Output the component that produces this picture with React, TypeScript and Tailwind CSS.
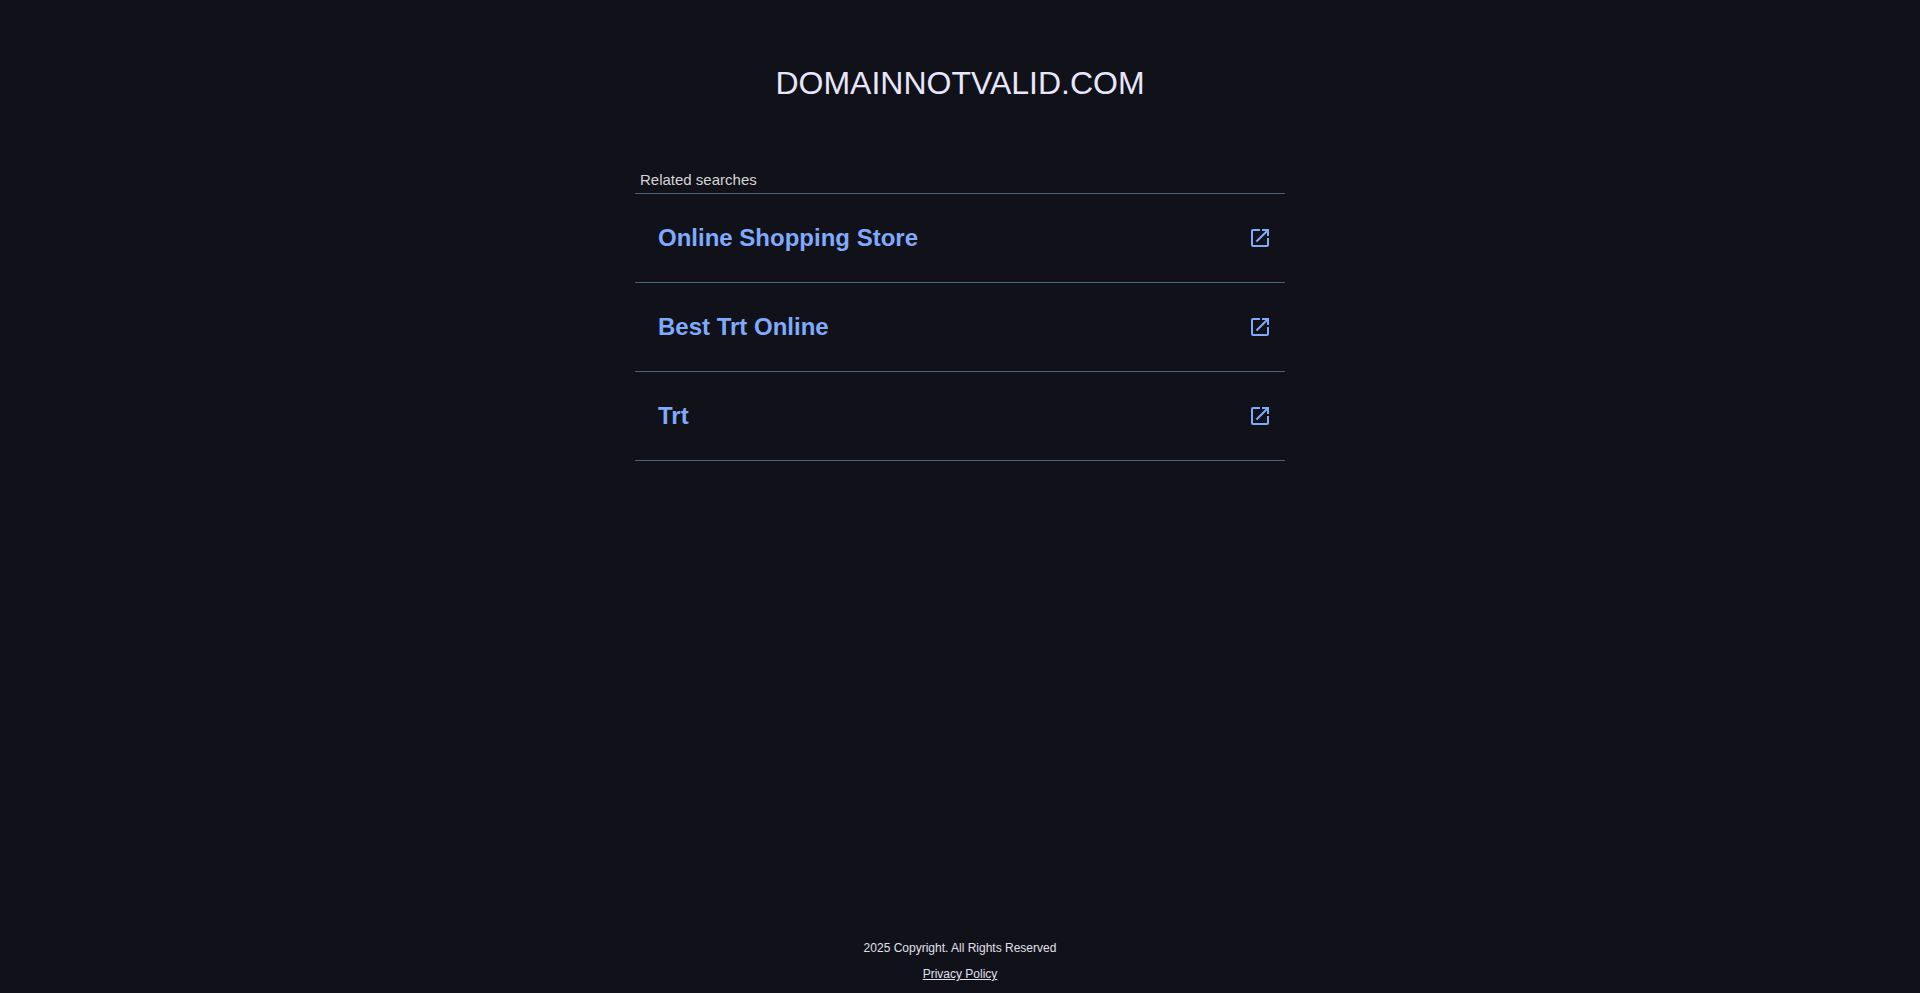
import { MdOpenInNew } from "react-icons/md";

const SEARCHES = ["Online Shopping Store", "Best Trt Online", "Trt"];

export default function App() {
  return (
    <div className="flex min-h-screen flex-col items-center bg-[#101119] font-['Liberation_Sans',Arial,sans-serif]">
      <header className="pt-[65px]">
        <h1 className="text-[32px] leading-9 text-[#e8e6fa]">DOMAINNOTVALID.COM</h1>
      </header>

      <main className="mt-16 w-full max-w-[650px] flex-1 pt-[5px]">
        <h2 className="px-[5px] pb-[3px] text-[15px] leading-5 text-[#d5d5d5]">Related searches</h2>
        <ul className="border-t border-[#48647c]">
          {SEARCHES.map((term) => (
            <li key={term} className="border-b border-[#48647c]">
              <a
                href="#"
                className="flex h-22 items-center justify-between pr-[13px] pl-[23px] text-2xl font-bold text-[#80aafc] hover:underline"
              >
                {term}
                <MdOpenInNew size={24} aria-hidden="true" />
              </a>
            </li>
          ))}
        </ul>
      </main>

      <footer className="flex flex-col items-center gap-3 pb-3 text-xs leading-[14px] text-[#e0e0ec]">
        <p>2025 Copyright. All Rights Reserved</p>
        <a href="#" className="underline">
          Privacy Policy
        </a>
      </footer>
    </div>
  );
}
